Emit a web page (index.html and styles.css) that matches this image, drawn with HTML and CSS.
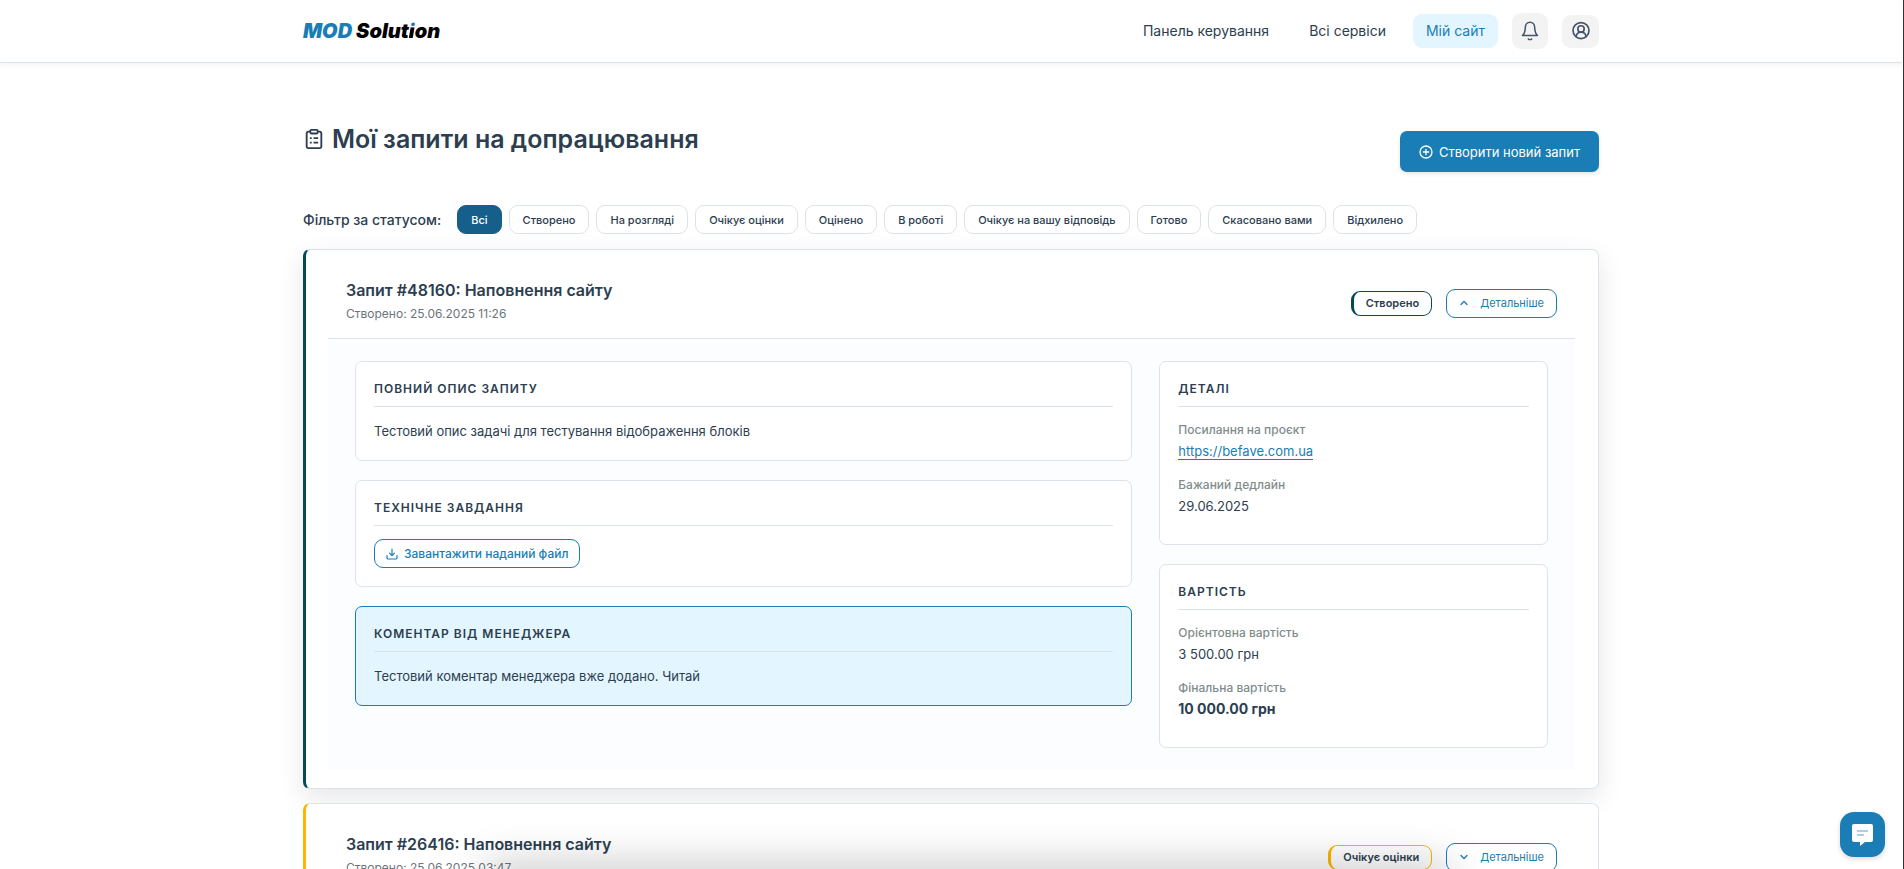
FILE: index.html
```html
<!DOCTYPE html>
<html lang="uk">

<head>
    <meta charset="UTF-8">
    <meta name="viewport" content="width=device-width, initial-scale=1.0">
    <title>Мої запити на допрацювання</title>
    <link rel="stylesheet" href="styles.css">
</head>

<body>
    <header class="header">
        <div class="container header-inner">
            <a href="#" class="logo"><span class="logo-mod">MOD</span> Solut<span class="logo-i">i</span>on</a>
            <nav class="nav">
                <a href="#" class="nav-link">Панель керування</a>
                <a href="#" class="nav-link">Всі сервіси</a>
                <a href="#" class="nav-link active">Мій сайт</a>
                <button type="button" class="icon-btn bell" aria-label="Сповіщення">
                    <svg width="20" height="20" viewBox="0 0 24 24" fill="none" stroke="currentColor" stroke-width="1.8" stroke-linecap="round" stroke-linejoin="round">
                        <path d="M3 17.500h18c-1.500-1.500-2.600-3.500-3-6l-.500-4.500a5.500 5.500 0 0 0-11 0L6 11.500c-.400 2.500-1.500 4.500-3 6z" />
                        <path d="M10 21.500c1 1 3 1 4 0" />
                    </svg>
                </button>
                <button type="button" class="icon-btn" aria-label="Профіль">
                    <svg width="20" height="20" viewBox="0 0 24 24" fill="none" stroke="currentColor" stroke-width="2" stroke-linecap="round">
                        <circle cx="12" cy="11.500" r="9.600" />
                        <circle cx="12" cy="9.500" r="3.800" />
                        <path d="M6.200 18.800c0-3.500 2.500-5.300 5.800-5.300s5.800 1.800 5.800 5.300" />
                    </svg>
                </button>
            </nav>
        </div>
    </header>

    <main class="container main">
        <div class="page-head">
            <h1 class="page-title">
                <svg width="22" height="22" viewBox="0 0 22 24" fill="none" stroke="currentColor" stroke-width="2" stroke-linejoin="round">
                    <path d="M7 4H5a2 2 0 0 0-2 2v14a2 2 0 0 0 2 2h12a2 2 0 0 0 2-2V6a2 2 0 0 0-2-2h-2" />
                    <rect x="7" y="2" width="8" height="4" rx="1" />
                    <path d="M6.500 11h2M10.500 11h5M6.500 16h2M10.500 16h5" />
                </svg>
                Мої запити на допрацювання
            </h1>
            <button type="button" class="btn-create">
                <svg width="14" height="14" viewBox="0 0 14 14" fill="none" stroke="currentColor" stroke-width="1.300" stroke-linecap="round">
                    <circle cx="7" cy="7" r="6" />
                    <path d="M7 4.300v5.400M4.300 7h5.400" />
                </svg>
                Створити новий запит
            </button>
        </div>

        <div class="filters">
            <span class="filters-label">Фільтр за статусом:</span>
            <button type="button" class="filter active">Всі</button>
            <button type="button" class="filter">Створено</button>
            <button type="button" class="filter">На розгляді</button>
            <button type="button" class="filter">Очікує оцінки</button>
            <button type="button" class="filter">Оцінено</button>
            <button type="button" class="filter">В роботі</button>
            <button type="button" class="filter">Очікує на вашу відповідь</button>
            <button type="button" class="filter">Готово</button>
            <button type="button" class="filter">Скасовано вами</button>
            <button type="button" class="filter">Відхилено</button>
        </div>

        <article class="card card-created open">
            <div class="card-head">
                <div>
                    <h2 class="card-title">Запит #48160: Наповнення сайту</h2>
                    <p class="card-date">Створено: 25.06.2025 11:26</p>
                </div>
                <div class="card-actions">
                    <span class="badge">Створено</span>
                    <button type="button" class="btn-outline btn-details">
                        <svg width="10" height="10" viewBox="0 0 10 10" fill="none" stroke="currentColor" stroke-width="1.300" stroke-linecap="round" stroke-linejoin="round">
                            <path d="M2 6.500l3-3 3 3" />
                        </svg>
                        Детальніше
                    </button>
                </div>
            </div>
            <div class="details">
                <div class="col">
                    <section class="box">
                        <h3 class="box-title">Повний опис запиту</h3>
                        <p class="text">Тестовий опис задачі для тестування відображення блоків</p>
                    </section>
                    <section class="box">
                        <h3 class="box-title">Технічне завдання</h3>
                        <button type="button" class="btn-outline">
                            <svg width="12" height="12" viewBox="0 0 12 12" fill="none" stroke="currentColor" stroke-width="1.200" stroke-linecap="round" stroke-linejoin="round">
                                <path d="M6 1v6.500M3.500 5.200L6 7.700l2.500-2.500M1 7.500V10a1 1 0 0 0 1 1h8a1 1 0 0 0 1-1V7.500" />
                            </svg>
                            Завантажити наданий файл
                        </button>
                    </section>
                    <section class="box box-manager">
                        <h3 class="box-title">Коментар від менеджера</h3>
                        <p class="text">Тестовий коментар менеджера вже додано. Читай</p>
                    </section>
                </div>
                <div class="col">
                    <section class="box">
                        <h3 class="box-title">Деталі</h3>
                        <dl class="info">
                            <dt>Посилання на проєкт</dt>
                            <dd><a href="#">https://befave.com.ua</a></dd>
                            <dt>Бажаний дедлайн</dt>
                            <dd>29.06.2025</dd>
                        </dl>
                    </section>
                    <section class="box">
                        <h3 class="box-title">Вартість</h3>
                        <dl class="info">
                            <dt>Орієнтовна вартість</dt>
                            <dd>3 500.00 грн</dd>
                            <dt>Фінальна вартість</dt>
                            <dd class="final-price">10 000.00 грн</dd>
                        </dl>
                    </section>
                </div>
            </div>
        </article>

        <article class="card card-waiting">
            <div class="card-head">
                <div>
                    <h2 class="card-title">Запит #26416: Наповнення сайту</h2>
                    <p class="card-date">Створено: 25.06.2025 03:47</p>
                </div>
                <div class="card-actions">
                    <span class="badge">Очікує оцінки</span>
                    <button type="button" class="btn-outline btn-details">
                        <svg width="10" height="10" viewBox="0 0 10 10" fill="none" stroke="currentColor" stroke-width="1.300" stroke-linecap="round" stroke-linejoin="round">
                            <path d="M2 3.500l3 3 3-3" />
                        </svg>
                        Детальніше
                    </button>
                </div>
            </div>
        </article>
    </main>

    <div class="bottom-shade"></div>

    <button type="button" class="chat" aria-label="Чат">
        <svg width="22" height="22" viewBox="0 0 22 22">
            <path fill="#fff" d="M2 0h17a2 2 0 0 1 2 2v14a2 2 0 0 1-2 2h-6l-5 4v-4H2a2 2 0 0 1-2-2V2a2 2 0 0 1 2-2z" />
            <path stroke="#a9cfe4" stroke-width="2" d="M5 7h11M5 11h7" />
        </svg>
    </button>
</body>

</html>
```
FILE: styles.css
```css
* {
    box-sizing: border-box;
}

html {
    scrollbar-width: none;
}

body {
    margin: 0;
    min-height: 100vh;
    padding-right: 1px;
    border-right: 1px solid #333;
    background: #fff;
    color: #2c3e50;
    font-family: Inter, "Noto Sans", sans-serif;
    font-size: 13px;
    line-height: 22px;
}

button {
    font: inherit;
    cursor: pointer;
}

h1,
h2,
h3,
p,
dl,
dd {
    margin: 0;
}

.container {
    max-width: 1296px;
    margin: 0 auto;
}

/* header */
.header {
    border-bottom: 1px solid #dce3eb;
    box-shadow: 0 2px 4px rgba(0, 0, 0, 0.05);
}

.header-inner {
    display: flex;
    align-items: center;
    justify-content: space-between;
    height: 62px;
}

.logo {
    color: #000;
    font-size: 20px;
    font-weight: 900;
    font-style: italic;
    text-decoration: none;
}

.logo-mod {
    color: #1a7db5;
}

/* blue dot over the black stem */
.logo-i {
    background: linear-gradient(#1a7db5 9px, #000 9px);
    background-clip: text;
    -webkit-background-clip: text;
    color: transparent;
}

.nav {
    display: flex;
    align-items: center;
    gap: 14px;
}

.nav-link {
    padding: 6px 13px;
    border-radius: 9px;
    color: #2c3e50;
    font-size: 14px;
    text-decoration: none;
}

.nav-link.active {
    background: #e3f5ff;
    color: #1a7db5;
}

.icon-btn {
    display: flex;
    align-items: center;
    justify-content: center;
    width: 37px;
    height: 33px;
    padding: 0;
    border: 0;
    border-radius: 9px;
    background: #f3f3f3;
    color: #44546a;
}

.icon-btn.bell {
    width: 36px;
    height: 36px;
}

/* page head */
.main {
    padding-top: 62px;
}

.page-head {
    display: flex;
    justify-content: space-between;
    height: 80px;
}

.page-title {
    display: flex;
    align-items: center;
    gap: 7px;
    height: 28px;
    font-size: 25px;
    font-weight: 600;
    line-height: 28px;
}

.btn-create {
    display: flex;
    align-items: center;
    gap: 6px;
    height: 41px;
    margin-top: 6px;
    padding: 0 19px;
    border: 0;
    border-radius: 7px;
    background: #1a7db5;
    color: #fff;
    box-shadow: 0 2px 4px rgba(0, 0, 0, 0.1);
}

/* filters */
.filters {
    display: flex;
    flex-wrap: wrap;
    align-items: center;
    gap: 7px;
    margin-bottom: 15px;
}

.filters-label {
    margin-right: 9px;
    font-size: 14px;
    font-weight: 500;
}

.filter {
    height: 29px;
    padding: 0 13px;
    border: 1px solid #dce3eb;
    border-radius: 9px;
    background: #fff;
    color: #2c3e50;
    font-size: 11px;
    font-weight: 500;
    line-height: 18px;
}

.filter.active {
    border-color: #155f8a;
    background: #155f8a;
    color: #fff;
}

/* cards */
.card {
    position: relative;
    margin-bottom: 14px;
    padding: 18px 23px 18px 22px;
    border: 1px solid #dce3eb;
    border-left: 3px solid #04495a;
    border-radius: 7px;
    background: #fff;
}

.card.open {
    box-shadow: 0 9px 27px rgba(0, 0, 0, 0.1);
}

.card-waiting {
    border-left-color: #ffb400;
}

.card-head {
    display: flex;
    align-items: center;
    justify-content: space-between;
    height: 70px;
    padding: 0 18px;
}

.card-title {
    font-size: 16px;
    font-weight: 600;
    line-height: 22px;
}

.card-date {
    padding: 4px 0;
    color: #6c757d;
    font-size: 12px;
    line-height: 18px;
}

.card-actions {
    display: flex;
    align-items: center;
    gap: 14px;
}

.badge {
    padding: 3px 12px;
    border: 1px solid #04495a;
    border-left-width: 3px;
    border-radius: 9px;
    font-size: 11px;
    font-weight: 600;
    line-height: 17px;
}

.card-waiting .badge {
    border-color: #ffb400;
}

.btn-outline {
    display: flex;
    align-items: center;
    gap: 6px;
    height: 29px;
    padding: 0 11px;
    border: 1px solid #1a7db5;
    border-radius: 9px;
    background: #fff;
    color: #1a7db5;
    font-size: 12px;
    font-weight: 500;
    line-height: 18px;
}

.btn-details {
    gap: 11px;
    padding: 0 12px;
    font-size: 11px;
    font-weight: 400;
}

.details {
    display: grid;
    grid-template-columns: 2fr 1fr;
    gap: 27px;
    padding: 22px 27px;
    border-top: 1px solid #dce3eb;
    background: #fcfdff;
}

.col {
    display: flex;
    flex-direction: column;
    gap: 19px;
}

.box {
    padding: 18px;
    border: 1px solid #dce3eb;
    border-radius: 7px;
    background: #fff;
}

.box-manager {
    border-color: #1a7db5;
    background: #e3f5ff;
}

.box-title {
    margin-bottom: 13px;
    padding-bottom: 8px;
    border-bottom: 1px solid #dce3eb;
    font-size: 12px;
    font-weight: 600;
    line-height: 18px;
    letter-spacing: 1px;
    text-transform: uppercase;
}

.info {
    padding-bottom: 10px;
}

.info dt {
    margin-bottom: 1px;
    color: #7f8c8d;
    font-size: 12px;
    font-weight: 500;
    line-height: 20px;
}

.info dd {
    line-height: 20px;
}

.info dd + dt {
    margin-top: 14px;
}

.info a {
    border-bottom: 1px solid #1a7db5;
    color: #1a7db5;
    text-decoration: none;
}

.info .final-price {
    font-size: 14px;
    font-weight: 700;
}

/* shade along the lower edge of the window */
.bottom-shade {
    position: fixed;
    right: 460px;
    bottom: -20px;
    left: 490px;
    height: 20px;
    box-shadow: 0 0 40px 4px rgba(0, 0, 0, 0.25);
}

.chat {
    position: fixed;
    right: 19px;
    bottom: 12px;
    display: flex;
    align-items: center;
    justify-content: center;
    width: 45px;
    height: 45px;
    padding: 0;
    border: 0;
    border-radius: 14px;
    background: #1a7db5;
    box-shadow: 0 2px 5px rgba(0, 0, 0, 0.15);
}
```
